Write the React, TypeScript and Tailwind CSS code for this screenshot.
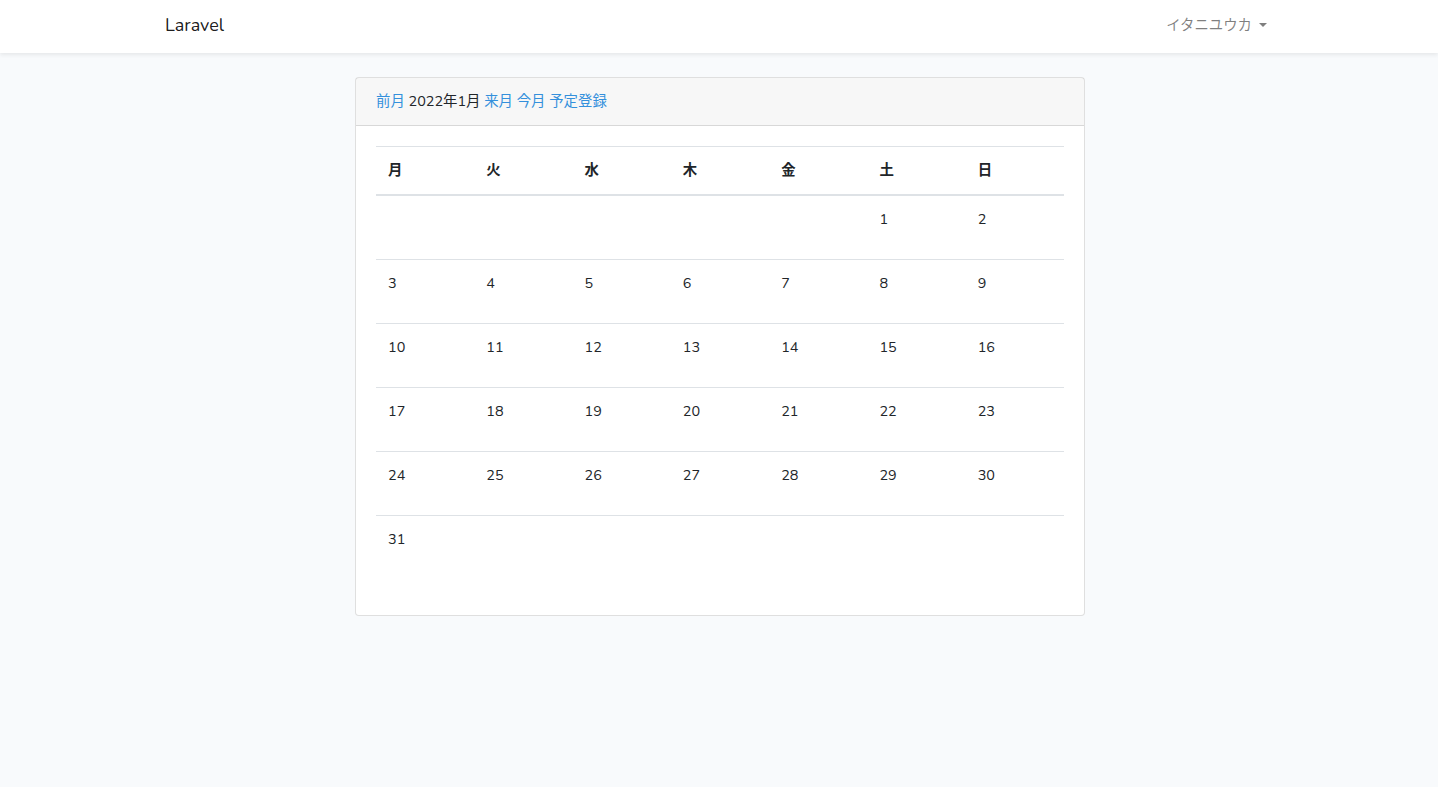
const weeks: (number | null)[][] = [
  [null, null, null, null, null, 1, 2],
  [3, 4, 5, 6, 7, 8, 9],
  [10, 11, 12, 13, 14, 15, 16],
  [17, 18, 19, 20, 21, 22, 23],
  [24, 25, 26, 27, 28, 29, 30],
  [31, null, null, null, null, null, null],
]

const days = ["月", "火", "水", "木", "金", "土", "日"]

export default function App() {
  return (
    <div
      className="min-h-screen bg-[#f8fafc] text-[#212529] text-[14.4px] leading-[1.6]"
      style={{ fontFamily: '"Nunito", "Noto Sans", "Noto Sans CJK JP", sans-serif' }}
    >
      {/* navbar */}
      <nav className="h-[53px] bg-white pl-[2px] shadow-[0_0.125rem_0.25rem_rgba(0,0,0,0.075)]">
        <div className="mx-auto flex h-full w-[1140px] items-center justify-between px-[15px] pb-[2px]">
          <a className="text-[18px] text-black/90">Laravel</a>
          <a className="flex items-center px-2 text-black/50">
            イタニユウカ
            <span className="ml-[7px] inline-block border-x-[4px] border-t-[4.5px] border-x-transparent border-t-black/50" />
          </a>
        </div>
      </nav>

      {/* main */}
      <main className="py-6 pl-[2px]">
        <div className="mx-auto w-[730px] rounded bg-white border border-black/[0.125]">
          <div className="border-b border-black/[0.125] bg-black/[0.03] px-5 py-3">
            <a className="text-[#3490dc]">前月</a> 2022年1月{" "}
            <a className="text-[#3490dc]">来月</a>{" "}
            <a className="text-[#3490dc]">今月</a>{" "}
            <a className="text-[#3490dc]">予定登録</a>
          </div>
          <div className="p-5">
            <table className="mb-4 w-full table-fixed border-collapse">
              <thead>
                <tr>
                  {days.map((d) => (
                    <th
                      key={d}
                      className="border-t border-b-2 border-[#dee2e6] p-3 text-left font-bold"
                    >
                      {d}
                    </th>
                  ))}
                </tr>
              </thead>
              <tbody>
                {weeks.map((w, i) => (
                  <tr key={i}>
                    {w.map((n, j) => (
                      <td
                        key={j}
                        className="h-[64px] border-t border-[#dee2e6] px-3 pt-3 pb-0 align-top"
                      >
                        {n ?? ""}
                      </td>
                    ))}
                  </tr>
                ))}
              </tbody>
            </table>
          </div>
        </div>
      </main>
    </div>
  )
}
